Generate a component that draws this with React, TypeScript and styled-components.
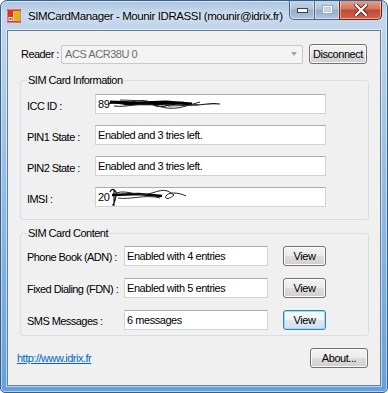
import styled, { createGlobalStyle } from 'styled-components';

// --- global ---
const GlobalStyle = createGlobalStyle`
  html, body {
    margin: 0;
    padding: 0;
    background: #ffffff;
  }
  body {
    font-family: "Liberation Sans", Arial, sans-serif;
    font-size: 11px;
    color: #000;
  }
`;

// --- window frame ---
const Window = styled.div`
  width: 388px;
  height: 393px;
  box-sizing: border-box;
  display: flex;
  flex-direction: column;
  padding: 0 6px 6px;
  border: 1px solid #34608e;
  border-radius: 7px 7px 5px 5px;
  background: linear-gradient(
    180deg,
    #aec6e0 0px,
    #c6d9ee 14px,
    #c0d4ea 29px,
    #9cc0e4 40%,
    #66a0d8 100%
  );
  box-shadow: inset 0 0 0 1px rgba(255, 255, 255, 0.5);
  overflow: hidden;
`;

const TitleBar = styled.div`
  height: 29px;
  display: flex;
  align-items: center;
  margin-right: -1px;
`;

const TitleIcon = styled.svg`
  width: 14px;
  height: 14px;
  margin-right: 7px;
  flex-shrink: 0;
`;

const TitleText = styled.span`
  font-family: "Liberation Sans", Arial, sans-serif;
  font-size: 11.5px;
  color: #000;
  letter-spacing: -0.4px;
  white-space: nowrap;
  text-shadow: 0 0 6px rgba(255, 255, 255, 0.9);
`;

const CaptionGroup = styled.div`
  margin-left: auto;
  align-self: flex-start;
  display: flex;
  height: 20px;
  margin-top: -1px;
`;

const CaptionButton = styled.div<{ $close?: boolean; $w: number; $first?: boolean }>`
  width: ${({ $w }) => $w}px;
  height: 20px;
  box-sizing: border-box;
  display: flex;
  align-items: center;
  justify-content: center;
  border: 1px solid ${({ $close }) => ($close ? '#6a2318' : '#4d6685')};
  border-top: none;
  margin-left: ${({ $first }) => ($first ? '0' : '-1px')};
  border-radius: ${({ $close, $first }) =>
    $close ? '0 0 5px 0' : $first ? '0 0 0 5px' : '0'};
  background: ${({ $close }) =>
    $close
      ? 'linear-gradient(180deg, #e3a391 0%, #d3775f 45%, #c24a32 55%, #d0664a 100%)'
      : 'linear-gradient(180deg, #c9d8e9 0%, #b0c4da 45%, #96aeca 55%, #afc5dd 100%)'};
  box-shadow: inset 0 0 0 1px rgba(255, 255, 255, 0.45);
`;

// --- client area ---
const Client = styled.div`
  flex: 1;
  display: flex;
  flex-direction: column;
  background: #f0f0f0;
  border: 1px solid #5f7f9f;
  outline: 1px solid rgba(255, 255, 255, 0.55);
`;

const ReaderRow = styled.div`
  display: flex;
  align-items: center;
  height: 20px;
  margin: 13px 13px 0;
`;

const Label = styled.span<{ $w?: number; $drop?: number }>`
  width: ${({ $w }) => ($w ? `${$w}px` : 'auto')};
  flex-shrink: 0;
  letter-spacing: -0.55px;
  white-space: nowrap;
  padding-top: ${({ $drop }) => $drop ?? 0}px;
`;

const Combo = styled.div`
  width: 242px;
  height: 19px;
  box-sizing: border-box;
  display: flex;
  align-items: center;
  justify-content: space-between;
  padding: 0 5px 0 3px;
  margin-right: 6px;
  background: #f4f4f4;
  border: 1px solid #c9c9c9;
  border-radius: 2px;
  color: #6d6d6d;
  letter-spacing: -0.45px;
`;

const ComboArrow = styled.span`
  width: 0;
  height: 0;
  border-left: 3px solid transparent;
  border-right: 3px solid transparent;
  border-top: 4px solid #a6a6a6;
`;

const Button = styled.div<{ $w: number; $focus?: boolean }>`
  width: ${({ $w }) => $w}px;
  height: 20px;
  box-sizing: border-box;
  display: flex;
  align-items: center;
  justify-content: center;
  flex-shrink: 0;
  border: 1px solid ${({ $focus }) => ($focus ? '#3c7fb1' : '#707070')};
  border-radius: 3px;
  background: ${({ $focus }) =>
    $focus
      ? 'linear-gradient(180deg, #f7fbfd 0%, #eef4f8 48%, #dde8ef 52%, #d3e0ea 100%)'
      : 'linear-gradient(180deg, #f3f3f3 0%, #ebebeb 48%, #dddddd 52%, #cfcfcf 100%)'};
  box-shadow: inset 0 0 0 1px ${({ $focus }) => ($focus ? '#9ad9f7' : '#fbfbfb')};
  letter-spacing: -0.45px;
  color: #000;
`;

// --- group boxes ---
const GroupBox = styled.fieldset<{ $top: number; $pt: number; $pb: number }>`
  margin: ${({ $top }) => $top}px 11px 0 12px;
  padding: ${({ $pt }) => $pt}px 6px ${({ $pb }) => $pb}px 6px;
  border: 1px solid #d5dfe5;
  border-radius: 3px;
  min-width: 0;
`;

const Legend = styled.legend`
  padding: 0 1px;
  line-height: 14px;
  letter-spacing: -0.5px;
  color: #000;
`;

const FieldList = styled.div<{ $gap: number }>`
  display: flex;
  flex-direction: column;
  gap: ${({ $gap }) => $gap}px;
`;

const FieldRow = styled.div`
  display: flex;
  align-items: center;
  height: 20px;
`;

const TextBox = styled.div<{ $w: number }>`
  width: ${({ $w }) => $w}px;
  height: 20px;
  box-sizing: border-box;
  display: flex;
  align-items: center;
  flex-shrink: 0;
  padding: 0 2px;
  background: #ffffff;
  border: 1px solid #d0d4da;
  border-top-color: #abadb3;
  letter-spacing: -0.45px;
  white-space: nowrap;
  overflow: hidden;
`;

const Scribble = styled.svg`
  flex-shrink: 0;
  margin-left: -1px;
`;

const ViewGap = styled.div`
  width: 15px;
  flex-shrink: 0;
`;

// --- footer ---
const Footer = styled.div`
  display: flex;
  align-items: center;
  justify-content: space-between;
  margin: 12px 12px 0 9px;
`;

const Link = styled.a`
  color: #0066cc;
  text-decoration: underline;
  letter-spacing: -0.5px;
  cursor: pointer;
`;

function AppIcon() {
  return (
    <TitleIcon viewBox="0 0 14 14">
      <rect x="0" y="0" width="14" height="14" rx="1" fill="#d8322a" />
      <rect x="0.5" y="0.5" width="13" height="13" rx="1" fill="none" stroke="#f07a6a" strokeWidth="1" />
      <rect x="6" y="2" width="7" height="10" fill="#f5cf3a" />
      <line x1="8" y1="2.5" x2="8" y2="11.5" stroke="#b98a0c" strokeWidth="0.9" />
      <line x1="10" y1="2.5" x2="10" y2="11.5" stroke="#b98a0c" strokeWidth="0.9" />
      <line x1="12" y1="2.5" x2="12" y2="11.5" stroke="#b98a0c" strokeWidth="0.9" />
      <rect x="1.5" y="8" width="4" height="4" fill="#e8eef8" />
      <rect x="2.5" y="9" width="2" height="2" fill="#3b6fc4" />
    </TitleIcon>
  );
}

function CaptionButtons() {
  return (
    <CaptionGroup>
      <CaptionButton $w={26} $first>
        <svg width="11" height="6" viewBox="0 0 11 6">
          <rect x="0.5" y="1.5" width="10" height="4" fill="#fff" stroke="#2f425c" strokeWidth="1" />
        </svg>
      </CaptionButton>
      <CaptionButton $w={26}>
        <svg width="11" height="9" viewBox="0 0 11 9">
          <rect x="0.5" y="0.5" width="10" height="8" fill="none" stroke="#8ea2bb" strokeWidth="1" />
          <rect x="1.5" y="1.5" width="8" height="6" fill="none" stroke="#ffffff" strokeWidth="1.2" />
          <rect x="2.5" y="3" width="6" height="3.5" fill="#c9d6e6" />
        </svg>
      </CaptionButton>
      <CaptionButton $w={43} $close>
        <svg width="14" height="12" viewBox="0 0 14 12">
          <path d="M2 1 L12 11 M12 1 L2 11" stroke="#5a1a12" strokeWidth="4" strokeLinecap="square" />
          <path d="M2 1 L12 11 M12 1 L2 11" stroke="#ffffff" strokeWidth="2.3" strokeLinecap="square" />
        </svg>
      </CaptionButton>
    </CaptionGroup>
  );
}

function IccScribble() {
  return (
    <Scribble width="112" height="14" viewBox="0 0 112 14">
      <path d="M0 7 C 8 3, 14 10, 22 6 S 38 3, 46 8 S 66 4, 80 7 S 98 5, 112 7" stroke="#111" strokeWidth="1.1" fill="none" />
      <path d="M2 5 L 30 6 L 58 5 L 84 7" stroke="#000" strokeWidth="3" fill="none" />
      <path d="M16 7 L 44 7 L 76 6" stroke="#000" strokeWidth="2.4" fill="none" />
      <path d="M6 9 C 20 11, 34 4, 50 9 S 74 10, 92 5" stroke="#222" strokeWidth="1" fill="none" />
      <path d="M12 3 L 40 4 M60 9 L 90 8" stroke="#333" strokeWidth="1.2" fill="none" />
    </Scribble>
  );
}

function ImsiScribble() {
  return (
    <Scribble width="80" height="18" viewBox="0 0 80 18">
      <path d="M2 4 C 4 -1, 9 2, 8 8 S 6 17, 4 17 M6 2 L 6 18" stroke="#111" strokeWidth="1.2" fill="none" />
      <path d="M4 7 L 30 6 L 54 8" stroke="#000" strokeWidth="2.6" fill="none" />
      <path d="M8 5 C 20 1, 30 10, 44 5 S 60 3, 66 7 C 62 11, 56 12, 58 8 S 70 4, 78 8" stroke="#222" strokeWidth="1" fill="none" />
      <path d="M10 10 C 22 12, 38 6, 52 10" stroke="#333" strokeWidth="1" fill="none" />
    </Scribble>
  );
}

export default function App() {
  return (
    <>
      <GlobalStyle />
      <Window>
        <TitleBar>
          <AppIcon />
          <TitleText>SIMCardManager - Mounir IDRASSI (mounir@idrix.fr)</TitleText>
          <CaptionButtons />
        </TitleBar>

        <Client>
          <ReaderRow>
            <Label $w={40}>Reader :</Label>
            <Combo>
              <span>ACS ACR38U 0</span>
              <ComboArrow />
            </Combo>
            <Button $w={58}>Disconnect</Button>
          </ReaderRow>

          <GroupBox $top={9} $pt={7} $pb={12}>
            <Legend>SIM Card Information</Legend>
            <FieldList $gap={11}>
              <FieldRow>
                <Label $w={68} $drop={3}>ICC ID :</Label>
                <TextBox $w={231}>
                  89
                  <IccScribble />
                </TextBox>
              </FieldRow>
              <FieldRow>
                <Label $w={68} $drop={3}>PIN1 State :</Label>
                <TextBox $w={231}>Enabled and 3 tries left.</TextBox>
              </FieldRow>
              <FieldRow>
                <Label $w={68} $drop={3}>PIN2 State :</Label>
                <TextBox $w={231}>Enabled and 3 tries left.</TextBox>
              </FieldRow>
              <FieldRow>
                <Label $w={68} $drop={3}>IMSI :</Label>
                <TextBox $w={231}>
                  20
                  <ImsiScribble />
                </TextBox>
              </FieldRow>
            </FieldList>
          </GroupBox>

          <GroupBox $top={6} $pt={6} $pb={5}>
            <Legend>SIM Card Content</Legend>
            <FieldList $gap={12}>
              <FieldRow>
                <Label $w={97} $drop={2}>Phone Book (ADN) :</Label>
                <TextBox $w={144}>Enabled with 4 entries</TextBox>
                <ViewGap />
                <Button $w={43}>View</Button>
              </FieldRow>
              <FieldRow>
                <Label $w={97} $drop={2}>Fixed Dialing (FDN) :</Label>
                <TextBox $w={144}>Enabled with 5 entries</TextBox>
                <ViewGap />
                <Button $w={43}>View</Button>
              </FieldRow>
              <FieldRow>
                <Label $w={97} $drop={2}>SMS Messages :</Label>
                <TextBox $w={144}>6 messages</TextBox>
                <ViewGap />
                <Button $w={43} $focus>View</Button>
              </FieldRow>
            </FieldList>
          </GroupBox>

          <Footer>
            <Link>http://www.idrix.fr</Link>
            <Button $w={58}>About...</Button>
          </Footer>
        </Client>
      </Window>
    </>
  );
}
